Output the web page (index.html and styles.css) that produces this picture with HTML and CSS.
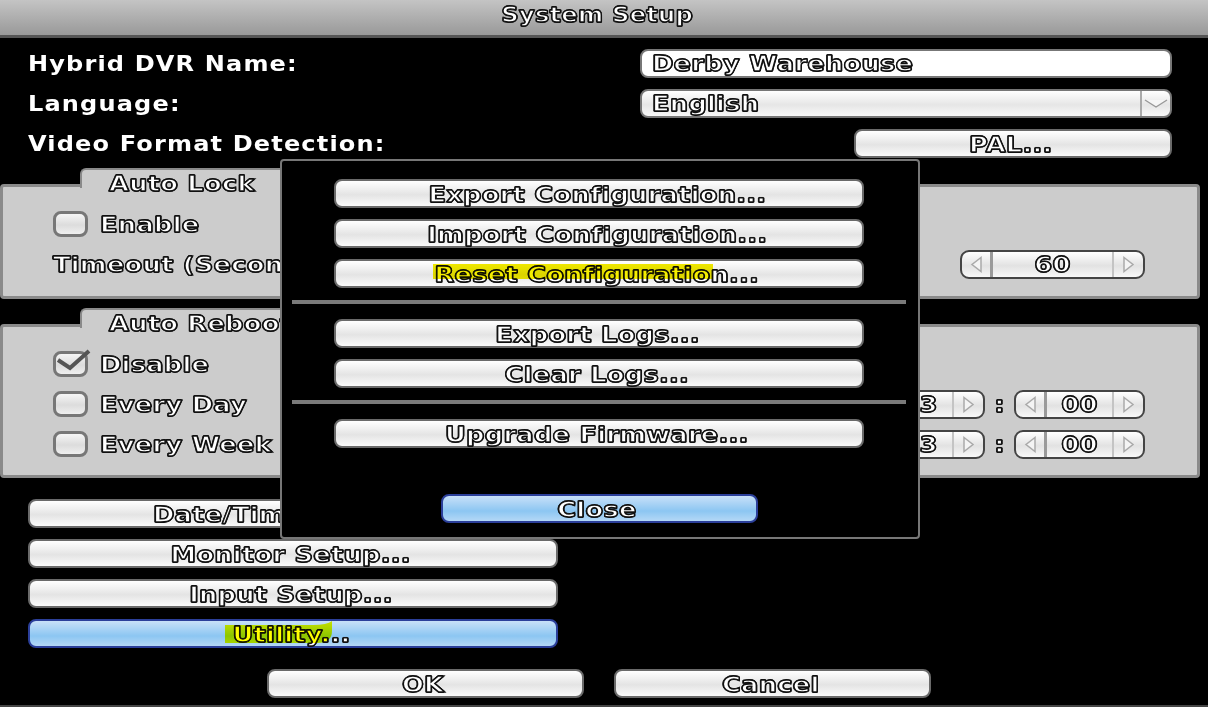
FILE: index.html
```html
<!DOCTYPE html>
<html lang="en">
<head>
<meta charset="utf-8">
<title>System Setup</title>
<link rel="stylesheet" href="styles.css">
</head>
<body>
<div class="screen">
  <header class="title"><span class="ot title-text">System Setup</span></header>
  <div class="form-row"><span class="plain">Hybrid DVR Name:</span><div class="input"><span class="ot left">Derby Warehouse</span></div></div>
  <div class="form-row"><span class="plain">Language:</span>
    <div class="select"><span class="ot left">English</span><span class="arrow"><svg width="24" height="10" viewBox="0 0 24 10"><path d="M1 1 L12 8 L23 1" fill="#f6f6f6" stroke="#999" stroke-width="1.4"/></svg></span></div>
  </div>
  <div class="form-row"><span class="plain">Video Format Detection:</span><div class="btn short"><span class="ot">PAL...</span></div></div>

  <section class="group lock">
    <div class="tab"><span class="ot left">Auto Lock</span></div>
    <div class="group-body">
      <div class="opt"><span class="check"></span><span class="ot left">Enable</span></div>
      <div class="opt between"><span class="ot left">Timeout (Seconds):</span>
        <div class="spin wide"><span class="sb l"><svg width="13" height="17" viewBox="0 0 13 17"><path d="M11 1.5 L2 8.5 L11 15.5Z" fill="#f4f4f4" stroke="#aaa" stroke-width="1.5"/></svg></span><span class="val"><span class="ot">60</span></span><span class="sb r"><svg width="13" height="17" viewBox="0 0 13 17"><path d="M2 1.5 L11 8.5 L2 15.5Z" fill="#f4f4f4" stroke="#aaa" stroke-width="1.5"/></svg></span></div>
      </div>
    </div>
  </section>

  <section class="group reboot">
    <div class="tab"><span class="ot left">Auto Reboot</span></div>
    <div class="group-body">
      <div class="opt"><span class="check"><svg class="tick" width="38" height="24" viewBox="0 0 38 24"><path d="M2 12 L14 20 L33 3" fill="none" stroke="#555" stroke-width="4"/></svg></span><span class="ot left">Disable</span></div>
      <div class="opt between"><span class="opt-in"><span class="check"></span><span class="ot left">Every Day</span></span>
        <div class="time">
          <div class="spin"><span class="sb l"><svg width="13" height="17" viewBox="0 0 13 17"><path d="M11 1.5 L2 8.5 L11 15.5Z" fill="#f4f4f4" stroke="#aaa" stroke-width="1.5"/></svg></span><span class="val"><span class="ot">03</span></span><span class="sb r"><svg width="13" height="17" viewBox="0 0 13 17"><path d="M2 1.5 L11 8.5 L2 15.5Z" fill="#f4f4f4" stroke="#aaa" stroke-width="1.5"/></svg></span></div>
          <span class="colon"><span class="ot">:</span></span>
          <div class="spin"><span class="sb l"><svg width="13" height="17" viewBox="0 0 13 17"><path d="M11 1.5 L2 8.5 L11 15.5Z" fill="#f4f4f4" stroke="#aaa" stroke-width="1.5"/></svg></span><span class="val"><span class="ot">00</span></span><span class="sb r"><svg width="13" height="17" viewBox="0 0 13 17"><path d="M2 1.5 L11 8.5 L2 15.5Z" fill="#f4f4f4" stroke="#aaa" stroke-width="1.5"/></svg></span></div>
        </div>
      </div>
      <div class="opt between"><span class="opt-in"><span class="check"></span><span class="ot left">Every Week</span></span>
        <div class="time">
          <div class="spin"><span class="sb l"><svg width="13" height="17" viewBox="0 0 13 17"><path d="M11 1.5 L2 8.5 L11 15.5Z" fill="#f4f4f4" stroke="#aaa" stroke-width="1.5"/></svg></span><span class="val"><span class="ot">03</span></span><span class="sb r"><svg width="13" height="17" viewBox="0 0 13 17"><path d="M2 1.5 L11 8.5 L2 15.5Z" fill="#f4f4f4" stroke="#aaa" stroke-width="1.5"/></svg></span></div>
          <span class="colon"><span class="ot">:</span></span>
          <div class="spin"><span class="sb l"><svg width="13" height="17" viewBox="0 0 13 17"><path d="M11 1.5 L2 8.5 L11 15.5Z" fill="#f4f4f4" stroke="#aaa" stroke-width="1.5"/></svg></span><span class="val"><span class="ot">00</span></span><span class="sb r"><svg width="13" height="17" viewBox="0 0 13 17"><path d="M2 1.5 L11 8.5 L2 15.5Z" fill="#f4f4f4" stroke="#aaa" stroke-width="1.5"/></svg></span></div>
        </div>
      </div>
    </div>
  </section>

  <nav class="menu">
    <div class="btn"><span class="ot">Date/Time Setup...</span></div>
    <div class="btn"><span class="ot">Monitor Setup...</span></div>
    <div class="btn"><span class="ot">Input Setup...</span></div>
    <div class="btn blue"><span class="ot">Utility...</span>
      <svg class="mark-green" width="107" height="22" viewBox="0 0 107 22"><path d="M0 4 L88 4 Q102 4 107 0 L107 10 Q107 22 92 22 L0 22Z" fill="#ffff00"/></svg>
    </div>
  </nav>
  <footer class="actions">
    <div class="btn"><span class="ot">OK</span></div>
    <div class="btn"><span class="ot">Cancel</span></div>
  </footer>

  <div class="dialog">
    <div class="btn"><span class="ot">Export Configuration...</span></div>
    <div class="btn"><span class="ot">Import Configuration...</span></div>
    <div class="btn"><span class="ot">Reset Configuration...</span><span class="mark-yellow"></span></div>
    <hr class="rule">
    <div class="btn"><span class="ot">Export Logs...</span></div>
    <div class="btn"><span class="ot">Clear Logs...</span></div>
    <hr class="rule">
    <div class="btn"><span class="ot">Upgrade Firmware...</span></div>
    <div class="btn blue close"><span class="ot">Close</span></div>
  </div>
</div>
</body>
</html>
```
FILE: styles.css
```css
* { box-sizing: border-box; }
html, body { margin: 0; padding: 0; background: #000; }
body { width: 1208px; height: 707px; overflow: hidden; }
.screen {
  position: relative;
  width: 1208px;
  height: 707px;
  background: #000;
  font-family: "DejaVu Sans", sans-serif;
  font-size: 22px;
  border-bottom: 2px solid #444;
}
.ot {
  display: inline-block;
  color: #fff;
  font-weight: 700;
  -webkit-text-stroke: 1.3px #111;
  text-shadow: 0.8px 0 0 #111, -0.8px 0 0 #111, 0 0.8px 0 #111, 0 -0.8px 0 #111;
  letter-spacing: 0.2px;
  white-space: pre;
  transform: scaleX(1.17);
}
.left { transform-origin: left center; }
.plain {
  display: inline-block;
  margin-left: 28px;
  color: #fff;
  font-weight: 700;
  letter-spacing: 1px;
  font-size: 21px;
  transform: scaleX(1.145);
  transform-origin: left center;
}

.title {
  height: 38px;
  background: linear-gradient(#c4c4c4, #999);
  border-bottom: 3px solid #555;
  display: flex;
  align-items: center;
  justify-content: center;
  padding: 0 13px 7px 0;
  margin-bottom: 11px;
}
.title-text { transform: scaleX(1.1); }

.form-row {
  height: 29px;
  margin-bottom: 11px;
  display: flex;
  align-items: center;
  justify-content: space-between;
  padding-right: 36px;
}
.input {
  width: 532px;
  height: 29px;
  background: #fff;
  border: 2px solid #777;
  border-radius: 8px;
  padding: 0 0 0 10px;
  display: flex;
  align-items: center;
}
.select {
  width: 532px;
  height: 29px;
  border: 2px solid #777;
  border-radius: 8px;
  background: linear-gradient(#fff, #e6e6e6 55%, #f8f8f8);
  padding: 0 0 0 10px;
  display: flex;
  align-items: center;
  justify-content: space-between;
  overflow: hidden;
}
.arrow {
  width: 30px;
  height: 25px;
  border-left: 2px solid #aaa;
  display: flex;
  align-items: center;
  justify-content: center;
}
.btn {
  position: relative;
  height: 29px;
  padding: 1px 4px 0 0;
  border: 2px solid #6a6a6a;
  border-radius: 8px;
  background: linear-gradient(#fff, #e4e4e4 55%, #fafafa);
  display: flex;
  align-items: center;
  justify-content: center;
}
.btn.short { width: 318px; }
.btn.blue {
  border-color: #2b3f9a;
  background: linear-gradient(#c8e0f8, #8cc6f2 60%, #b4d8f6);
}

.group { margin-top: -1px; }
.reboot { margin-top: 9px; }
.tab {
  position: relative;
  z-index: 1;
  margin-left: 80px;
  margin-bottom: -4px;
  width: 202px;
  height: 20px;
  padding-left: 27px;
  background: #ccc;
  border: 2px solid #8a8a8a;
  border-bottom: 0;
  border-right: 0;
  border-top-left-radius: 6px;
  line-height: 27px;
}
.group-body {
  width: 1200px;
  background: #ccc;
  border: 3px solid #8a8a8a;
  border-radius: 4px;
  padding: 22px 52px 0 50px;
}
.lock .group-body { height: 115px; }
.reboot .group-body { height: 154px; }
.opt {
  height: 30px;
  margin-bottom: 10px;
  display: flex;
  align-items: center;
  gap: 12px;
}
.opt-in { display: flex; align-items: center; gap: 12px; }
.between { justify-content: space-between; }
.check {
  position: relative;
  flex: none;
  width: 35px;
  height: 26px;
  border: 3px solid #777;
  border-radius: 8px;
  background: linear-gradient(#f5f5f5, #dcdcdc 55%, #efefef);
}
.tick { position: absolute; left: 0; top: -6px; }
.spin {
  width: 131px;
  height: 29px;
  flex: none;
  border: 2px solid #444;
  border-radius: 9px;
  background: linear-gradient(#fff, #e2e2e2 55%, #f8f8f8);
  display: flex;
  align-items: center;
  overflow: hidden;
}
.spin.wide { width: 185px; }
.sb {
  flex: none;
  width: 31px;
  height: 100%;
  display: flex;
  align-items: center;
  justify-content: center;
}
.sb.l { border-right: 3px solid #9a9a9a; }
.sb.r { border-left: 2px solid #c4c4c4; }
.val { flex: 1; text-align: center; }
.time { display: flex; align-items: center; }
.colon { width: 29px; text-align: center; padding-top: 1px; }

.menu {
  margin-top: 21px;
  margin-left: 28px;
  width: 530px;
  display: flex;
  flex-direction: column;
  gap: 11px;
}
.actions {
  margin-top: 21px;
  margin-left: 267px;
  display: flex;
  gap: 30px;
}
.actions .btn { width: 317px; }

.mark-yellow {
  position: absolute;
  left: 97px;
  top: 3px;
  width: 280px;
  height: 15px;
  background: #f5ee00;
  mix-blend-mode: multiply;
}
.mark-green {
  position: absolute;
  left: 195px;
  top: 0;
  mix-blend-mode: multiply;
}

.dialog {
  position: absolute;
  z-index: 2;
  left: 280px;
  top: 159px;
  width: 640px;
  height: 380px;
  background: #000;
  border: 2px solid #777;
  border-radius: 4px;
  padding: 18px 12px 0 10px;
  display: flex;
  flex-direction: column;
}
.dialog .btn { flex: none; margin: 0 42px 11px; }
.rule {
  width: 100%;
  height: 4px;
  flex: none;
  background: #7a7a7a;
  border: 0;
  margin: 1px 0 15px;
}
.dialog .btn.close {
  margin: 35px auto 0;
  width: 317px;
}
```
